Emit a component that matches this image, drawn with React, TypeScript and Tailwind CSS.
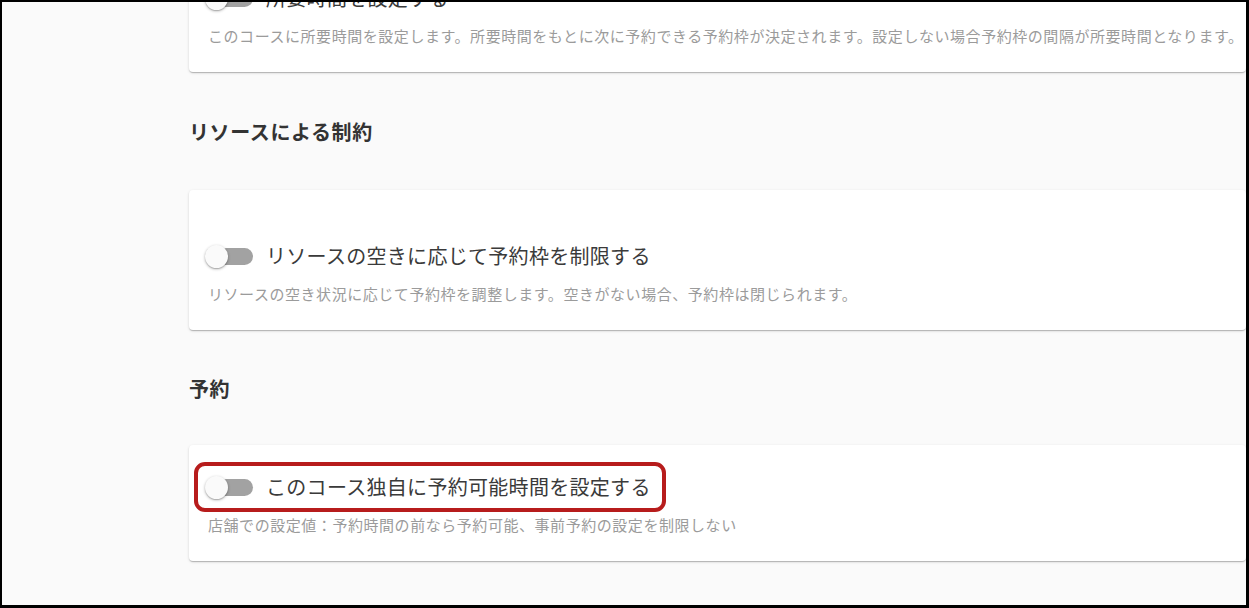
const font = { fontFamily: '"Noto Sans CJK JP", "Noto Sans", sans-serif' };

function Toggle() {
  return (
    <div className="relative h-[23px] w-[50px] shrink-0">
      <div className="absolute left-[3px] top-[3px] h-[17px] w-[45px] rounded-full bg-[#a2a2a2]" />
      <div className="absolute left-0 top-0 h-[23px] w-[23px] rounded-full bg-[#fafafa] shadow-[0_1px_3px_rgba(0,0,0,0.3),0_1px_1px_rgba(0,0,0,0.14)]" />
    </div>
  );
}

function ToggleRow({ label, marked = false }: { label: string; marked?: boolean }) {
  return (
    <div
      className={`ml-[-14px] inline-flex h-[50px] items-center gap-[11px] rounded-[11px] border-4 pl-[7px] pr-[11px] ${
        marked ? "border-[#b71c1c]" : "border-transparent"
      }`}
    >
      <Toggle />
      <span className="text-[20px] leading-[28px] tracking-[0.3px] text-[#3a3a3a]">{label}</span>
    </div>
  );
}

function Card({
  label,
  desc,
  tall = false,
  marked = false,
  className = "",
}: {
  label: string;
  desc: string;
  tall?: boolean;
  marked?: boolean;
  className?: string;
}) {
  return (
    <div
      className={`rounded-[4px] bg-white pb-[25px] pl-[19px] shadow-[0_2px_1px_-1px_rgba(0,0,0,0.12),0_1px_1px_rgba(0,0,0,0.1),0_1px_3px_rgba(0,0,0,0.14)] ${
        tall ? "pt-[41px]" : "pt-[17px]"
      } ${className}`}
    >
      <ToggleRow label={label} marked={marked} />
      <p className="mt-[2px] whitespace-nowrap text-[15px] leading-[22px] tracking-[0.55px] text-[#9b9b9b]">
        {desc}
      </p>
    </div>
  );
}

export default function App() {
  return (
    <div
      style={font}
      className="h-[608px] w-[1249px] overflow-hidden border-b-[3px] border-l-2 border-r-[3px] border-t-2 border-black bg-[#fafafa]"
    >
      <div className="pl-[187px]">
        <Card
          className="mt-[-46px]"
          label="所要時間を設定する"
          desc="このコースに所要時間を設定します。所要時間をもとに次に予約できる予約枠が決定されます。設定しない場合予約枠の間隔が所要時間となります。"
        />

        <h2 className="mb-[44px] mt-[46px] text-[20px] font-bold leading-[28px] tracking-[0.6px] text-[#333]">
          リソースによる制約
        </h2>

        <Card
          tall
          label="リソースの空きに応じて予約枠を制限する"
          desc="リソースの空き状況に応じて予約枠を調整します。空きがない場合、予約枠は閉じられます。"
        />

        <h2 className="mb-[42px] mt-[45px] text-[20px] font-bold leading-[28px] tracking-[0.6px] text-[#333]">
          予約
        </h2>

        <Card
          marked
          label="このコース独自に予約可能時間を設定する"
          desc="店舗での設定値：予約時間の前なら予約可能、事前予約の設定を制限しない"
        />
      </div>
    </div>
  );
}
